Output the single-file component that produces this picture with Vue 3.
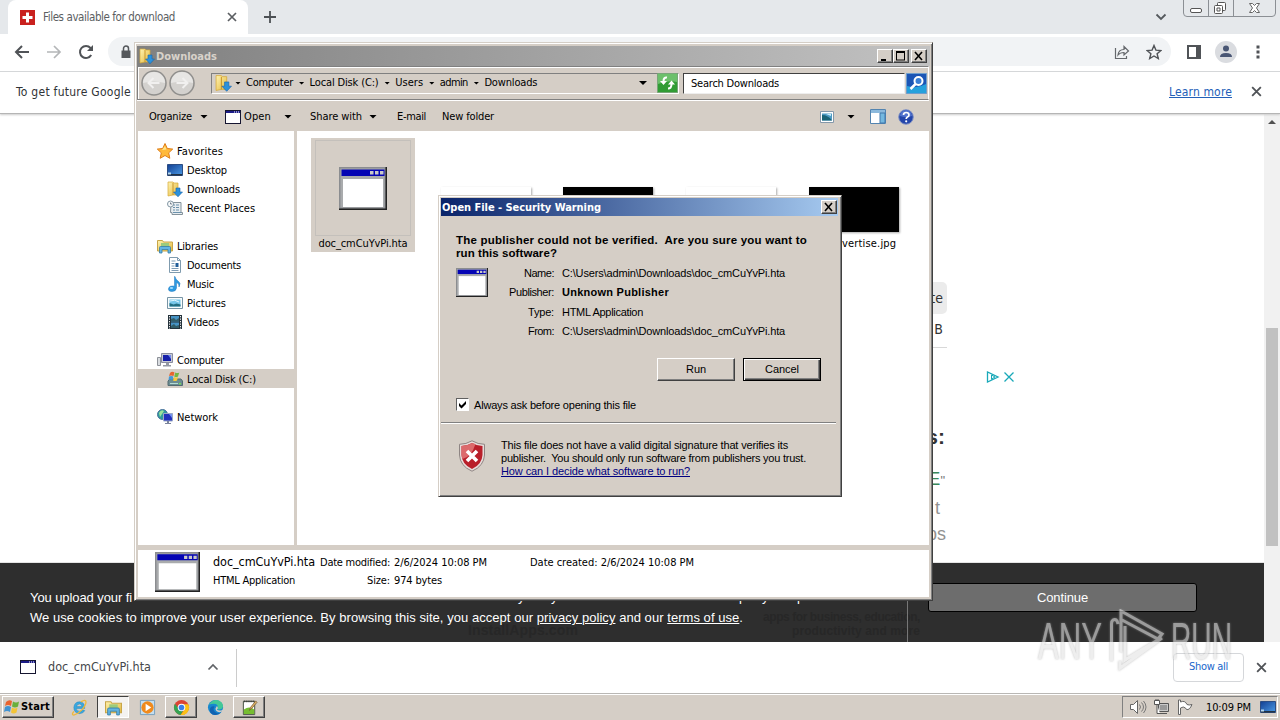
<template>
    <main class="desktop">
        <!-- shared icons -->
        <svg class="sprite">
            <defs>
                <linearGradient id="folderFill" x1="0" y1="0" x2="1" y2="1">
                    <stop offset="0" stop-color="#fff3b0" />
                    <stop offset="1" stop-color="#e3b83f" />
                </linearGradient>
                <linearGradient id="blueFill" x1="0" y1="0" x2="1" y2="1">
                    <stop offset="0" stop-color="#123f92" />
                    <stop offset="1" stop-color="#4c9be6" />
                </linearGradient>
            </defs>
            <symbol id="hta" viewBox="0 0 48 43" preserveAspectRatio="none">
                <path d="M0 0h48v43H0z" fill="#222" />
                <path d="M0 0h46.500v41.500H0z" fill="#8b8d90" />
                <path d="M1.500 1.500h44v39h-44z" fill="#a9abad" />
                <path d="M2.500 2.500h43v6.500h-43z" fill="#0404b4" />
                <path d="M31 4h3.500v3.500H31zM36 4h3.500v3.500H36zM41 4h3.500v3.500H41z" fill="#c8c8c8" />
                <path d="M4 12h40v28H4z" fill="#fff" />
            </symbol>
            <symbol id="smallhta" viewBox="0 0 16 14" preserveAspectRatio="none">
                <path d="M0 0h16v14H0z" fill="#151530" />
                <path d="M1 3h14v10H1z" fill="#fff" />
                <path d="M1 1h14v2H1z" fill="#1b1b88" />
                <path d="M9 1.500h1v1H9zM11 1.500h1v1h-1zM13 1.500h1v1h-1z" fill="#fff" />
            </symbol>
            <symbol id="downloads" viewBox="0 0 16 16">
                <path d="M1 1h5l1 1h4v12H6l-5 1z" fill="url(#folderFill)" stroke="#d6a936" stroke-width=".7" />
                <path d="M6 2v12" stroke="#c9962b" />
                <path d="M9 7h4v4h2.500L11 15.800 6.500 11H9z" fill="#2c91db" stroke="#1765ad" stroke-width=".6" />
            </symbol>
            <symbol id="star" viewBox="0 0 16 16">
                <path d="M8 .5l2.300 5 5.400.6-4 3.700 1.100 5.500L8 12.500l-4.800 2.800 1.100-5.500-4-3.700 5.400-.6z" fill="#ffb93a" stroke="#df7d17" />
                <path d="M8 3l1.400 3.500L5 7z" fill="#ffe58a" />
            </symbol>
            <symbol id="desktop" viewBox="0 0 16 16">
                <path d="M.5 2.500h15v11H.5z" fill="url(#blueFill)" stroke="#2c4d83" />
                <path d="M1 12h14v1.500H1z" fill="#234" />
                <path d="M1 10.500h3v2H1z" fill="#b4d6ef" />
            </symbol>
            <symbol id="recent" viewBox="0 0 16 16">
                <path d="M4 2.500h10v10h1.500v2H5v-2H3.500z" fill="#e8edf0" stroke="#84929b" />
                <path d="M6 5h2m1 0h3M6 7.500h2m1 0h3M6 10h2m1 0h3M6 12.500h8" stroke="#6b91ac" />
                <circle cx="3.500" cy="4" r="3" fill="#f6f8f9" stroke="#8296a3" />
                <path d="M3.500 2.500V4H5" fill="none" stroke="#456" stroke-width=".7" />
            </symbol>
            <symbol id="libraries" viewBox="0 0 16 16">
                <path d="M.5 2.500h5l1 1.500H15.500v9H.5z" fill="url(#folderFill)" stroke="#c8a548" />
                <path d="M4 5h8v5H4z" fill="#9bcb7d" />
                <path d="M2.500 15V9.500q0-1 1-1h9q1 0 1 1V15h-2.500v-3.500h-6V15z" fill="#62b4e3" stroke="#347da8" stroke-width=".8" />
            </symbol>
            <symbol id="documents" viewBox="0 0 16 16">
                <path d="M2.500.5h8l3 3v12h-11z" fill="#fff" stroke="#7f9bae" />
                <path d="M10.500.5v3h3M4.500 4h4M4.500 6.500h3M4.500 9h3M4.500 11.500h7M4.500 13.500h7" fill="none" stroke="#7e9cb5" />
                <path d="M8.500 6h3v4h-3z" fill="#205d99" />
            </symbol>
            <symbol id="music" viewBox="0 0 16 16">
                <path d="M8 .5q.5 3 3 4.500 3.500 2 1 6 .5-3.500-2.500-4.500V12q-.5 3.500-4.500 3.500T1.500 12.500 6 10q1.200 0 1.500.3V.5z" fill="#2c9ae2" stroke="#2478bd" stroke-width=".5" />
                <ellipse cx="4.500" cy="12" rx="1.700" ry="1" fill="#9edcff" />
            </symbol>
            <symbol id="pictures" viewBox="0 0 16 16">
                <path d="M.5 2.500h15v11H.5z" fill="#f8fbfc" stroke="#7794a5" />
                <path d="M2.500 4.500h11v7h-11z" fill="#77c6e9" />
                <path d="M2.500 8l4 1.500 3-1 4 1v2h-11z" fill="#236e82" />
                <path d="M3 6q5-2 9 1" fill="none" stroke="#e2f6ff" />
            </symbol>
            <symbol id="videos" viewBox="0 0 16 16">
                <path d="M1 1h14v14H1z" fill="#25333c" />
                <path d="M4 2h8v5.500H4zM4 8.500h8V14H4z" fill="#4693c4" />
                <path d="M4 5l3-1 2 2 3-2v3.500H4zM4 12l3-2 2 2 3-1v3H4z" fill="#315d68" />
                <path d="M2.500 2v13M13.500 2v13" stroke="#eee" stroke-dasharray="1.300 1.200" />
            </symbol>
            <symbol id="computer" viewBox="0 0 16 16">
                <path d="M.5 5.500h3v8h-3z" fill="#d9dce0" stroke="#8d9198" />
                <path d="M4.500 1.500h11v9h-11z" fill="#c7cad4" stroke="#898d9f" />
                <path d="M6 3h8v6H6z" fill="#1620aa" />
                <path d="M11 3h3v4z" fill="#738bf0" />
                <path d="M9 11h3v2h2v1.500H6V13h3z" fill="#9499a3" />
            </symbol>
            <symbol id="disk" viewBox="0 0 16 16">
                <path d="M1 10l2-2h11l1.500 2v4.500H1z" fill="#6c8c91" stroke="#526b71" />
                <path d="M3 12.500h8" stroke="#b4dcd5" />
                <path d="M12 12h2v1.500h-2z" fill="#74e054" />
                <path d="M3 2q2-2 4.500-.5L6.500 5Q4 4 2 5z" fill="#e76530" />
                <path d="M8.300 1.500q2 1 4 0L11 5.500q-2 1-3.800 0z" fill="#73b743" />
                <path d="M2 5.500q2-1 4.300 0L5.500 9q-2-1-4 0z" fill="#4399d8" />
                <path d="M7 6q2 1 4 0l-1 3.500q-2 1-4 0z" fill="#f5c83c" />
            </symbol>
            <symbol id="network" viewBox="0 0 16 16">
                <circle cx="5.500" cy="5.500" r="5" fill="#2f9c9e" stroke="#4b719c" />
                <path d="M2 4q2-4 5-2L5 5 3 8z" fill="#9ce29b" />
                <path d="M6.500 4.500h9v7.500h-9z" fill="#2230bd" stroke="#9caac6" />
                <path d="M12 5h3v4z" fill="#7593f1" />
                <path d="M10 12h2v2h2v1H8v-1h2z" fill="#7b849b" />
            </symbol>
            <symbol id="cross" viewBox="0 0 12 12">
                <path d="M2 2l8 8M10 2l-8 8" fill="none" stroke="currentColor" stroke-width="1.700" />
            </symbol>
        </svg>

        <section class="browser">
            <header class="tabs">
                <div class="tab">
                    <svg class="favicon" viewBox="0 0 15 15"><path d="M0 0h15v15H0z" fill="#c9211e" /><path d="M6 2.500h3V6h3.500v3H9v3.500H6V9H2.500V6H6z" fill="#fff" /></svg>
                    <span v-fit="132">Files available for download</span>
                    <svg class="tab-close"><use href="#cross" /></svg>
                </div>
                <svg class="plus" viewBox="0 0 14 14"><path d="M7 1v12M1 7h12" stroke="#4c5054" stroke-width="1.800" /></svg>
                <svg class="chevron" viewBox="0 0 12 8"><path d="M1.500 1.500L6 6l4.500-4.500" fill="none" stroke="#55595d" stroke-width="1.800" /></svg>
                <svg class="caption" viewBox="0 0 94 17">
                    <path d="M.5 0v13q0 3.500 3.500 3.500h85q3.500 0 3.500-3.500V0M25.500 0v16M50.500 0v16" fill="none" stroke="#8b8f94" />
                    <rect x="7.500" y="8.500" width="11" height="4" rx="1.500" fill="#fff" stroke="#555" />
                    <rect x="34.500" y="2.500" width="8" height="8" rx="1" fill="#fff" stroke="#555" />
                    <rect x="31.500" y="5.500" width="8" height="8" rx="1" fill="#fff" stroke="#555" />
                    <path d="M34 8h3v3h-3z" fill="none" stroke="#555" />
                    <path d="M66.500 3.500h3l2 2 2-2h3L73.500 8l3 4.500h-3l-2-2-2 2h-3l3-4.500z" fill="#fff" stroke="#666" />
                </svg>
            </header>

            <div class="toolbar">
                <svg class="nav" viewBox="0 0 16 16"><path d="M15 8H2M8 2L2 8l6 6" fill="none" stroke="#505357" stroke-width="2" /></svg>
                <svg class="nav" viewBox="0 0 16 16"><path d="M1 8h13M8 2l6 6-6 6" fill="none" stroke="#b4b6b8" stroke-width="1.700" /></svg>
                <svg class="nav" viewBox="0 0 16 16"><path d="M13.200 11A6 6 0 1 1 12.500 4l1 1" fill="none" stroke="#505357" stroke-width="2" /><path d="M15 1v6H9z" fill="#505357" /></svg>
                <div class="omnibox">
                    <svg class="lock" viewBox="0 0 10 14"><path d="M1 5.500h8.500V13H.5V5.500z" fill="#55585c" /><path d="M2.500 6V3.500a2.500 2.500 0 0 1 5 0V6" fill="none" stroke="#55585c" stroke-width="1.500" /></svg>
                    <svg class="share" viewBox="0 0 16 16"><path d="M1.500 4v10.500h11V12M4 11q.5-5.500 6-5.500V2.500l4.500 4.500-4.500 4V8.500Q6 8.500 4 11z" fill="none" stroke="#65686c" stroke-width="1.200" /></svg>
                    <svg class="bookmark" viewBox="0 0 16 16"><path d="M8 1.500l1.900 4.600 5 .4-3.800 3.200 1.200 4.800L8 12l-4.300 2.500 1.200-4.800L1.100 6.500l5-.4z" fill="none" stroke="#505357" stroke-width="1.400" /></svg>
                </div>
                <svg class="side" viewBox="0 0 14 14"><path d="M1 1h12v12H1z" fill="none" stroke="#505357" stroke-width="2" /><path d="M9 1h4v12H9z" fill="#505357" /></svg>
                <svg class="avatar" viewBox="0 0 22 22"><circle cx="11" cy="11" r="11" fill="#dadce0" /><circle cx="11" cy="7.500" r="3" fill="#495674" /><path d="M5 16q0-4 6-4t6 4z" fill="#495674" /></svg>
                <svg class="menu" viewBox="0 0 4 14"><path d="M.5.5h3v3h-3zM.5 5.500h3v3h-3zM.5 10.500h3v3h-3z" fill="#505357" /></svg>
            </div>

            <div class="infobar">
                <span v-fit="115">To get future Google</span>
                <a v-fit="63">Learn more</a>
                <svg class="info-close"><use href="#cross" /></svg>
            </div>

            <div class="viewport">
                <div class="page">
                    <div class="article">
                        <span class="cell head">Date</span>
                        <span class="cell">B</span>
                        <strong>s:</strong>
                        <span class="green">E<i>"</i></span>
                        <span class="grey first">t</span>
                        <span class="grey">ps</span>
                    </div>
                    <svg class="adchoices" viewBox="0 0 28 12"><path d="M1.500 1v10L12 6z" fill="none" stroke="#19a9b9" stroke-width="1.300" /><path d="M5.500 4v4.500M5.500 4L9 6 5.500 8" stroke="#19a9b9" fill="none" /><path d="M18.500 1.500l9 9m0-9l-9 9" stroke="#19a9b9" stroke-width="1.300" /></svg>
                    <footer class="cookies">
                        <b class="ghost brand" v-fit="110">InstallApps.com</b>
                        <b class="ghost tags"><span v-fit="157">apps for business, education,</span><br><span v-fit="128">productivity and more</span></b>
                        <i class="rule"></i>
                        <div class="cookie-text">
                            <p class="first-line">
                                <span v-fit="102">You upload your fi</span>
                                <span class="tail">y</span>
                                <span class="tail t2">y</span>
                                <span class="tail t3">p</span>
                                <span class="tail t4">y</span>
                                <span class="tail t5">p</span>
                            </p>
                            <p v-fit="713">We use cookies to improve your user experience. By browsing this site, you accept our <a>privacy policy</a> and our <a>terms of use</a>.</p>
                        </div>
                        <button><span v-fit="51">Continue</span></button>
                    </footer>
                </div>
                <div class="scrollbar">
                    <svg viewBox="0 0 8 4"><path d="M0 4l4-4 4 4z" fill="#505050" /></svg>
                    <div class="thumb"></div>
                </div>
            </div>

            <div class="shelf">
                <div class="download">
                    <svg class="shelf-icon"><use href="#smallhta" /></svg>
                    <span v-fit="103">doc_cmCuYvPi.hta</span>
                    <svg class="up" viewBox="0 0 12 8"><path d="M1.500 6.500L6 2l4.500 4.500" fill="none" stroke="#606367" stroke-width="1.700" /></svg>
                </div>
                <button class="show-all"><span v-fit="39">Show all</span></button>
                <svg class="shelf-close"><use href="#cross" /></svg>
            </div>
        </section>

        <section class="explorer">
            <header class="title inactive">
                <svg class="i16"><use href="#downloads" /></svg>
                <b v-fit="61">Downloads</b>
                <div class="controls">
                    <i class="ctl"><svg viewBox="0 0 12 10"><path d="M2 8h5v2H2z" /></svg></i>
                    <i class="ctl"><svg viewBox="0 0 12 10"><path d="M1 0h9v9.500H1zM2 2v6.500h7V2z" fill-rule="evenodd" /></svg></i>
                    <i class="ctl last"><svg viewBox="0 0 12 10"><path d="M2 1l7 8M9 1L2 9" stroke="#000" stroke-width="1.600" /></svg></i>
                </div>
            </header>

            <div class="address-row">
                <div class="rounds">
                    <svg viewBox="0 0 26 26"><circle cx="13" cy="13" r="12" fill="#d3d1ce" stroke="#908f8d" stroke-width="1.500" /><path d="M2 13a11 11 0 0 1 22 0q-11-3-22 0" fill="#e7e6e4" /><path d="M18.500 13H8M12.500 8l-5 5 5 5" fill="none" stroke="#f1f0ef" stroke-width="2" /></svg>
                    <svg viewBox="0 0 26 26"><circle cx="13" cy="13" r="12" fill="#d3d1ce" stroke="#908f8d" stroke-width="1.500" /><path d="M2 13a11 11 0 0 1 22 0q-11-3-22 0" fill="#e7e6e4" /><path d="M7.500 13H18M13.500 8l5 5-5 5" fill="none" stroke="#f1f0ef" stroke-width="2" /></svg>
                </div>
                <div class="address">
                    <svg class="i18"><use href="#downloads" /></svg>
                    <template v-for="crumb in crumbs" :key="crumb.name">
                        <i class="down small"></i>
                        <span v-fit="crumb.width">{{ crumb.name }}</span>
                    </template>
                    <i class="down drop"></i>
                    <svg class="refresh" viewBox="0 0 21 20"><path d="M.5.5h20v19H.5z" fill="#319c34" stroke="#78a678" /><path d="M1 1h19v8q-9-2-19 2z" fill="#6cc06b" /><path d="M10 4.500q-3.500-.5-3.500 4M11 15.500q3.500 0 3.500-4.500" fill="none" stroke="#fff" stroke-width="2" /><path d="M3 8h7l-3.500 4zM11 11.500h7l-3.500-4z" fill="#fff" /></svg>
                </div>
                <div class="search"><span v-fit="88">Search Downloads</span></div>
                <svg class="search-btn" viewBox="0 0 21 21"><path d="M.5.5h20v20H.5z" fill="#1b55b5" stroke="#6d9dcc" /><path d="M1 13q10 3 19-2v9H1z" fill="#25a1dc" /><circle cx="12.500" cy="8" r="4" fill="#397ed4" stroke="#fff" stroke-width="2" /><path d="M9.500 11L4.500 16" stroke="#fff" stroke-width="2.500" /></svg>
            </div>

            <div class="commands">
                <span v-fit="43">Organize</span><i class="down c1"></i>
                <svg class="open-icon"><use href="#smallhta" /></svg>
                <span v-fit="27">Open</span><i class="down c2"></i>
                <span v-fit="52">Share with</span><i class="down c3"></i>
                <span class="email" v-fit="29">E-mail</span>
                <span class="folder" v-fit="52">New folder</span>
                <svg class="view" viewBox="0 0 14 12"><path d="M.5.5h13v11H.5z" fill="#fff" stroke="#8498aa" /><path d="M2 2.500h10v7H2z" fill="#4d9ac4" /><path d="M2 4q6 0 10 5.500H2z" fill="#1a6477" /><path d="M6 3h5v2z" fill="#c6effd" /></svg>
                <i class="down c4"></i>
                <svg class="pane" viewBox="0 0 16 15"><path d="M.5.5h15v14H.5z" fill="#fff" stroke="#5384b0" /><path d="M1 1h14v3H1z" fill="#8cb9dc" /><path d="M10 4h5v10h-5z" fill="#74b8df" stroke="#4279ac" /></svg>
                <svg class="help" viewBox="0 0 16 16"><circle cx="8" cy="8" r="7.300" fill="#2345aa" stroke="#8293c5" /><path d="M2 7a6 6 0 0 1 12 0q-6 2-12 0" fill="#5273cd" /><path d="M5.500 6q0-2.500 2.700-2.500T11 6q0 1.300-1.600 2.100Q8.200 8.800 8.200 10" fill="none" stroke="#fff" stroke-width="1.700" /><circle cx="8.200" cy="12.300" r="1.100" fill="#fff" /></svg>
            </div>

            <div class="content">
                <nav class="tree">
                    <div v-for="(row, i) in tree" :key="i" class="row" :class="{ child: row.child, selected: row.selected }">
                        <template v-if="row.name">
                            <svg class="i16"><use :href="'#' + row.icon" /></svg>
                            <span v-fit="row.width">{{ row.name }}</span>
                        </template>
                    </div>
                </nav>
                <div class="files">
                    <div class="file picked">
                        <div class="frame"><svg><use href="#hta" /></svg></div>
                        <span v-fit="89">doc_cmCuYvPi.hta</span>
                    </div>
                    <div v-for="(file, i) in images" :key="i" class="file">
                        <div class="frame"><div class="shot" :class="file.tone"></div></div>
                        <span v-if="file.name" class="img-name" v-fit="67">{{ file.name }}</span>
                    </div>
                </div>
            </div>

            <footer class="details">
                <svg class="big"><use href="#hta" /></svg>
                <div class="info">
                    <span class="fname" v-fit="102">doc_cmCuYvPi.hta</span>
                    <span class="key" v-fit="70">Date modified:</span>
                    <span v-fit="93">2/6/2024 10:08 PM</span>
                    <span class="created" v-fit="164">Date created: 2/6/2024 10:08 PM</span>
                    <span v-fit="82">HTML Application</span>
                    <span class="key" v-fit="23">Size:</span>
                    <span v-fit="48">974 bytes</span>
                </div>
            </footer>
        </section>

        <section class="dialog">
            <header class="title active">
                <b v-fit="159">Open File - Security Warning</b>
                <i class="ctl last"><svg viewBox="0 0 12 10"><path d="M2 1l7 8M9 1L2 9" stroke="#000" stroke-width="1.600" /></svg></i>
            </header>
            <div class="warn">
                <h1><span v-fit="351">The publisher could not be verified.&nbsp; Are you sure you want to</span><br><span v-fit="101">run this software?</span></h1>
                <div class="facts">
                    <svg class="prog"><use href="#hta" /></svg>
                    <dl>
                        <template v-for="fact in facts" :key="fact.label">
                            <dt><span v-fit="fact.lw">{{ fact.label }}</span></dt>
                            <dd :class="{ strong: fact.bold }"><span v-fit="fact.w">{{ fact.value }}</span></dd>
                        </template>
                    </dl>
                </div>
                <div class="buttons">
                    <button><span v-fit="20">Run</span></button>
                    <button class="default"><span v-fit="34">Cancel</span></button>
                </div>
                <label class="ask">
                    <i class="box"><svg viewBox="0 0 9 9"><path d="M1 3v3l2.500 2.500L8 4V1L3.500 5.500z" /></svg></i>
                    <span v-fit="162">Always ask before opening this file</span>
                </label>
            </div>
            <hr>
            <div class="notice">
                <svg class="shield" viewBox="0 0 28 32">
                    <path d="M14 .8q6 3.500 12.500 3.500V15Q26 26 14 31.200 2 26 1.500 15V4.300Q8 4.300 14 .8z" fill="#e7dcda" stroke="#8e8583" />
                    <path d="M14 3q5 3 10.500 3v9Q24 24.500 14 29 4 24.500 3.500 15V6Q9 6 14 3z" fill="#b91f2a" />
                    <path d="M14 3Q9 6 3.500 6v9q0 2 1 4 9-2 13-15z" fill="#dc6a6c" />
                    <path d="M9 11l10 10M19 11L9 21" stroke="#fff" stroke-width="3.600" />
                </svg>
                <p>
                    <span v-fit="287">This file does not have a valid digital signature that verifies its</span><br>
                    <span v-fit="305">publisher.&nbsp; You should only run software from publishers you trust.</span><br>
                    <a v-fit="189">How can I decide what software to run?</a>
                </p>
            </div>
        </section>

        <footer class="taskbar">
            <button class="start">
                <svg viewBox="0 0 16 16"><path d="M2 3q3-3 6-1L7 7Q4 5 1 7z" fill="#e9632f" /><path d="M9 2.500q3 2 6 0L14 7.500q-3 2-6 0z" fill="#69af3c" /><path d="M1 8q3-2 6 0l-1 5q-3-2-6 0z" fill="#4193d2" /><path d="M8 8.500q3 2 5.500 0l-1 5q-3 2-5.500 0z" fill="#f3c436" /></svg>
                <b v-fit="29">Start</b>
            </button>
            <div class="task"><svg viewBox="0 0 18 18"><path d="M14.500 10H5.500q.5 3 3.800 3 2.300 0 3.300-1.500l2 .8Q13 15.500 9 15.500q-6-.5-6-6.500 .5-6 6.200-6 5.800.5 5.300 7zM5.700 8h6q-.4-2.700-2.700-2.700T5.700 8z" fill="#3aa8df" stroke="#2383bd" stroke-width=".5" /><path d="M3 13q-3 4 0 4 4-1 9-6 5-6 3.500-9-1-1.500-5 1" fill="none" stroke="#efb83a" stroke-width="1.400" /></svg></div>
            <div class="task pressed"><svg><use href="#libraries" /></svg></div>
            <div class="task"><svg viewBox="0 0 18 18"><path d="M1.500 1.500h15v15h-15z" fill="#c5dff0" stroke="#769ebb" /><circle cx="9" cy="9" r="6.500" fill="#f08a1c" /><path d="M7 5l6 4-6 4z" fill="#fff" /></svg></div>
            <div class="task raised"><svg viewBox="0 0 18 18"><circle cx="9" cy="9" r="8" fill="#dc4334" /><path d="M2.070 5A8 8 0 0 0 8 16.900L12 10H6z" fill="#34a352" /><path d="M9 5.500h7.200A8 8 0 0 1 8 16.900l4.500-6z" fill="#fbc116" /><circle cx="9" cy="9" r="4" fill="#fff" /><circle cx="9" cy="9" r="3" fill="#3d7fe8" /></svg></div>
            <div class="task"><svg viewBox="0 0 18 18"><circle cx="9" cy="9" r="8" fill="#1787cf" /><path d="M2 6q3-5 8-5 7 1 7 7-1 4-6 3 2-6-4-6-3 0-5 1z" fill="#44c897" /><path d="M8 8q-3 5 3 7 2 .6 4-1-3 3.500-7 3-5-1-5-6 1-4 5-3z" fill="#1263b1" /><path d="M10.500 7.500q2 2 0 4 3 1.800 6.500-.5v2l-4 1q-4-.5-4-4z" fill="#d4cec6" /></svg></div>
            <div class="task raised"><svg viewBox="0 0 18 18"><path d="M2.500 2.500h12v14h-12z" fill="#fff" stroke="#414b3b" /><path d="M3 11q6-4 11 0v5H3z" fill="#76bd30" /><path d="M3 2.500h11" stroke="#333" stroke-width="2" stroke-dasharray="1 1" /><path d="M9 12l1-3 5.500-7L17 3.500l-6 7z" fill="#dcb365" stroke="#6c4b26" stroke-width=".7" /></svg></div>
            <div class="tray">
                <svg class="speaker" viewBox="0 0 18 16"><path d="M1.500 5.500h3l4-4v13l-4-4h-3z" fill="#fff" stroke="#666" /><path d="M10.500 5.500q2 2.500 0 5M12.500 3.500q4 4.500 0 9M14.500 2q5 6 0 12" fill="none" stroke="#777" /></svg>
                <svg class="net" viewBox="0 0 16 16"><path d="M5.500 4.500h10v8h-10z" fill="#c9c9c9" stroke="#555" /><path d="M7 6h7v5H7z" fill="#999" /><path d="M7 14.500h7M1.500 1.500h5v4h-5zM3 0v2M5 0v2M4 5.500v9h3" fill="#fff" stroke="#555" /></svg>
                <svg class="flag" viewBox="0 0 16 16"><path d="M1.500 1v14.500h2V9q3-2 5 0l1 1.500q3 1 5.500-5-3 1-5 0Q8 1 3.500 3V1z" fill="#fff" stroke="#666" /></svg>
                <span v-fit="45">10:09 PM</span>
                <svg class="peek"><use href="#desktop" /></svg>
            </div>
        </footer>

        <svg class="watermark" viewBox="0 0 196 64">
            <text x="0" y="50" textLength="64" lengthAdjust="spacingAndGlyphs">ANY</text>
            <path d="M80 15q-1-6-5-4-1.500 1-1.500 4v37M83 43V2l41 23-4 5-36-19M87 17v34l36-22M82 52v7l42-30" />
            <text x="133" y="50" textLength="61" lengthAdjust="spacingAndGlyphs">RUN</text>
        </svg>
    </main>
</template>

<script setup>
// spreads the letters of a label over the given width
const vFit = {
    mounted(el, { value }) {
        const range = document.createRange();
        range.selectNodeContents(el);
        const natural = range.getBoundingClientRect().width;
        el.style.letterSpacing = `${(value - natural) / el.textContent.length}px`;
    },
};

const crumbs = [
    { name: 'Computer', width: 47 },
    { name: 'Local Disk (C:)', width: 69 },
    { name: 'Users', width: 28 },
    { name: 'admin', width: 28 },
    { name: 'Downloads', width: 53 },
];

const tree = [
    { name: 'Favorites', icon: 'star', width: 46 },
    { name: 'Desktop', icon: 'desktop', width: 40, child: true },
    { name: 'Downloads', icon: 'downloads', width: 53, child: true },
    { name: 'Recent Places', icon: 'recent', width: 68, child: true },
    {},
    { name: 'Libraries', icon: 'libraries', width: 41 },
    { name: 'Documents', icon: 'documents', width: 54, child: true },
    { name: 'Music', icon: 'music', width: 27, child: true },
    { name: 'Pictures', icon: 'pictures', width: 39, child: true },
    { name: 'Videos', icon: 'videos', width: 32, child: true },
    {},
    { name: 'Computer', icon: 'computer', width: 47 },
    { name: 'Local Disk (C:)', icon: 'disk', width: 69, child: true, selected: true },
    {},
    { name: 'Network', icon: 'network', width: 41 },
];

const images = [
    { tone: 'white' },
    { tone: 'black' },
    { tone: 'white' },
    { tone: 'black', name: 'advertise.jpg' },
];

const facts = [
    { label: 'Name:', value: 'C:\\Users\\admin\\Downloads\\doc_cmCuYvPi.hta', lw: 30, w: 223 },
    { label: 'Publisher:', value: 'Unknown Publisher', lw: 45, w: 107, bold: true },
    { label: 'Type:', value: 'HTML Application', lw: 26, w: 81 },
    { label: 'From:', value: 'C:\\Users\\admin\\Downloads\\doc_cmCuYvPi.hta', lw: 26, w: 223 },
];
</script>

<style>
body {
    overflow: hidden;
}
</style>

<style scoped>
.desktop {
    position: relative;
    width: 1280px;
    height: 720px;
    overflow: hidden;
    background: #fff;
    font: 11px/14px "DejaVu Sans Condensed", "DejaVu Sans", sans-serif;
    font-stretch: condensed;
    color: #000;
    white-space: nowrap;
}

.desktop * {
    box-sizing: border-box;
}

svg {
    display: block;
    flex: none;
}

span, b, a {
    flex: none;
}

.sprite {
    position: absolute;
    width: 0;
    height: 0;
}

.i16 {
    width: 16px;
    height: 16px;
}

.i18 {
    width: 17px;
    height: 18px;
}

button {
    padding: 0;
    font: inherit;
}

/* browser */
.browser {
    height: 693px;
    display: flex;
    flex-direction: column;
}

.tabs {
    display: flex;
    height: 34px;
    padding-left: 8px;
    background: #e5e8eb;
}

.tab {
    display: flex;
    align-items: center;
    width: 240px;
    padding-left: 12px;
    background: #fff;
    border-radius: 8px 8px 0 0;
    color: #5b5e62;
    font-size: 11.500px;
}

.favicon {
    width: 15px;
    height: 15px;
    margin-right: 8px;
}

.tab-close {
    width: 12px;
    height: 12px;
    margin-left: auto;
    margin-right: 10px;
}

.plus {
    width: 14px;
    height: 14px;
    margin: 10px 0 0 15px;
}

.chevron {
    width: 12px;
    height: 8px;
    margin: 13px 16px 0 auto;
}

.caption {
    width: 94px;
    height: 17px;
    margin-right: 3px;
}

.toolbar {
    display: flex;
    align-items: center;
    height: 38px;
    padding: 0 20px 2px 14px;
    border-bottom: 1px solid #d6d8da;
}

.nav {
    width: 16px;
    height: 16px;
    margin-right: 16px;
}

.omnibox {
    display: flex;
    align-items: center;
    width: 1064px;
    height: 29px;
    margin-left: -2px;
    padding: 0 9px 0 13px;
    border-radius: 15px;
    background: #f1f3f5;
}

.lock {
    width: 10px;
    height: 14px;
}

.share {
    width: 16px;
    height: 16px;
    margin-left: auto;
    margin-right: 16px;
}

.bookmark {
    width: 16px;
    height: 16px;
}

.side {
    width: 14px;
    height: 14px;
    margin-left: 16px;
}

.avatar {
    width: 22px;
    height: 22px;
    margin-left: 14px;
}

.menu {
    width: 4px;
    height: 14px;
    margin-left: 19px;
}

.infobar {
    position: relative;
    display: flex;
    align-items: center;
    height: 42px;
    padding: 0 18px 2px 16px;
    border-bottom: 1px solid #b5b5b5;
    box-shadow: 0 1px 2px #ccc;
    font-size: 12px;
    color: #303336;
}

.infobar a {
    margin-left: auto;
    color: #2360b8;
    text-decoration: underline;
}

.info-close {
    width: 13px;
    height: 13px;
    margin-left: 18px;
    margin-right: -1px;
    color: #505357;
}

.viewport {
    display: flex;
    flex: 1;
    overflow: hidden;
}

.page {
    position: relative;
    width: 1264px;
    display: flex;
    flex-direction: column;
}

.article {
    display: flex;
    flex-direction: column;
    align-items: flex-end;
    width: 947px;
    height: 449px;
    padding-top: 168px;
    font: 16px/32px "Liberation Sans", Arial, sans-serif;
    color: #333;
}

.cell {
    width: 60px;
    height: 34px;
    padding-right: 4px;
    text-align: right;
    border-bottom: 1px solid #d8d8d8;
    font: 14px/30px "DejaVu Sans Condensed", sans-serif;
}

.head {
    height: 32px;
    border: 0;
    border-radius: 5px;
    background: #ebebeb;
    line-height: 32px;
}

.article strong {
    margin: 73px 2px 0 0;
    font-size: 21px;
}

.green {
    margin: 12px 2px 0 0;
    color: #38875a;
    font-size: 18px;
    line-height: 28px;
}

.green i {
    font-size: 13px;
    font-style: normal;
    color: #777;
}

.grey {
    margin-right: 1px;
    font-size: 18px;
    line-height: 26px;
    color: #929292;
}

.first {
    margin-right: 7px;
}

.adchoices {
    position: absolute;
    left: 986px;
    top: 257px;
    width: 28px;
    height: 12px;
}

.cookies {
    position: relative;
    display: flex;
    justify-content: space-between;
    height: 80px;
    padding: 20px 67px 0 30px;
    border-top: 1px solid #e4e4e4;
    background: #2e2e2e;
    color: #fff;
    font: 13px/20px "Liberation Sans", Arial, sans-serif;
}

.cookie-text {
    padding-top: 5px;
}

.cookie-text p {
    position: relative;
    width: max-content;
    margin: 0;
}

.cookie-text .first-line {
    display: flex;
}

.cookie-text a {
    text-decoration: underline;
}

/* ends of the first line that hang below the explorer window */
.tail {
    width: 7px;
    margin: -1px 0 0 386px;
}

.t2 {
    margin-left: 26px;
}

.t3 {
    margin-left: 181px;
}

.t4 {
    margin-left: 16px;
}

.t5 {
    margin-left: 28px;
}

.cookies button {
    width: 269px;
    height: 29px;
    padding-top: 1px;
    border: 1px solid #000;
    border-radius: 3px;
    background: #6d6d6d;
    color: #fff;
}

.ghost {
    position: absolute;
    color: #272727;
}

.brand {
    left: 468px;
    top: 60px;
    font-size: 14px;
    line-height: 14px;
}

.tags {
    left: 760px;
    top: 47px;
    width: 160px;
    font-size: 12px;
    line-height: 14px;
    text-align: right;
}

.rule {
    position: absolute;
    left: 907px;
    top: 30px;
    width: 1px;
    height: 49px;
    background: #777;
}

.scrollbar {
    width: 16px;
    padding: 6px 2px 0;
    background: #f1f1f1;
}

.scrollbar svg {
    width: 8px;
    height: 4px;
    margin-left: 2px;
}

.thumb {
    height: 218px;
    margin-top: 204px;
    background: #c1c1c1;
}

.shelf {
    display: flex;
    align-items: center;
    height: 51px;
    padding-right: 12px;
    background: #fff;
}

.download {
    display: flex;
    align-items: center;
    width: 237px;
    height: 38px;
    padding: 0 17px 1px 20px;
    border-right: 1px solid #ccc;
    color: #44474a;
    font-size: 12.500px;
}

.shelf-icon {
    width: 16px;
    height: 14px;
    margin-right: 12px;
}

.up {
    width: 12px;
    height: 8px;
    margin-left: auto;
}

.show-all {
    width: 71px;
    height: 29px;
    margin-left: auto;
    padding-bottom: 2px;
    border: 1px solid #d5d7da;
    border-radius: 4px;
    background: #fff;
    color: #1a66cb;
}

.shelf-close {
    width: 13px;
    height: 13px;
    margin-left: 11px;
    color: #505357;
}

/* windows */
.explorer {
    position: absolute;
    left: 134px;
    top: 42px;
    width: 799px;
    height: 559px;
    padding: 2px;
    border: 1px solid;
    border-color: #d4cec6 #404040 #404040 #d4cec6;
    box-shadow: inset 1px 1px #fff, inset -1px -1px #808080;
    background: #d5cec6;
}

.title {
    display: flex;
    align-items: center;
    color: #fff;
}

.title b {
    margin-top: 1px;
    font-size: 11px;
}

.inactive {
    height: 20px;
    margin: 1px 0 0;
    padding: 0 3px 0 2px;
    background: linear-gradient(90deg, #808080, #c2c2c2);
    color: #d8d2ca;
}

.inactive b {
    margin-left: 1px;
}

.controls {
    display: flex;
    margin-left: auto;
}

.ctl {
    display: flex;
    align-items: center;
    justify-content: center;
    width: 16px;
    height: 14px;
    border: 1px solid;
    border-color: #fff #404040 #404040 #fff;
    box-shadow: inset -1px -1px #808080;
    background: #d5cec6;
}

.ctl svg {
    width: 12px;
    height: 10px;
}

.controls .last {
    margin-left: 2px;
}

.address-row {
    display: flex;
    align-items: center;
    height: 34px;
    margin: 0 1px 0 0;
    padding-left: 3px;
    border: 1px solid;
    border-color: #808080 #fff #808080 #808080;
    box-shadow: inset 1px 1px #fff, 0 1px #fff;
}

.rounds {
    display: flex;
    gap: 2px;
}

.rounds svg {
    width: 26px;
    height: 26px;
}

.address {
    display: flex;
    align-items: center;
    width: 468px;
    height: 21px;
    margin-left: 16px;
    padding-left: 3px;
    border: 1px solid;
    border-color: #808080 #fff #fff #808080;
}

.down {
    display: block;
    flex: none;
    width: 8px;
    height: 4px;
    background: #000;
    clip-path: polygon(0 0, 100% 0, 50% 100%);
}

.small {
    width: 6px;
    height: 3px;
    margin: 0 5px 0 5.600px;
}

.i18 + .small {
    margin-left: 3px;
}

.drop {
    margin-left: auto;
    margin-right: 10px;
}

.refresh {
    width: 21px;
    height: 20px;
}

.search {
    width: 222px;
    height: 21px;
    margin-left: 4px;
    padding: 3px 7px;
    border: 1px solid;
    border-color: #404040 #eee #eee #404040;
    background: #fff;
}

.search-btn {
    width: 21px;
    height: 21px;
    margin-left: 1px;
}

.commands {
    display: flex;
    align-items: center;
    height: 31px;
    padding: 2px 16px 0 12px;
}

.c1 {
    margin: 0 17px 0 8px;
}

.c2 {
    margin: 0 18px 0 13px;
}

.c3 {
    margin-left: 7px;
}

.c4 {
    margin: 0 15px 0 13px;
}

.open-icon {
    width: 16px;
    height: 14px;
    margin-right: 3px;
}

.email {
    margin-left: 20px;
}

.folder {
    margin-left: 16px;
}

.view {
    width: 14px;
    height: 12px;
    margin-left: auto;
}

.pane {
    width: 16px;
    height: 15px;
    margin-right: 12px;
}

.help {
    width: 16px;
    height: 16px;
}

.content {
    display: flex;
    height: 414px;
    margin: 0 1px;
    background: #fff;
}

.tree {
    width: 159px;
    padding-top: 10px;
    border-right: 3px solid #d5cec6;
}

.row {
    display: flex;
    align-items: center;
    gap: 4px;
    height: 19px;
    padding-left: 19px;
}

.row span {
    margin-top: 2px;
}

.child {
    padding-left: 29px;
}

.selected {
    background: #d5cec6;
}

.files {
    display: flex;
    gap: 18.700px;
    padding: 7px 0 0 14px;
}

.file {
    width: 104px;
    height: 114px;
    padding: 2px 3px;
    text-align: center;
}

.file > span {
    display: block;
    margin-top: 1px;
}

.frame {
    display: flex;
    align-items: center;
    justify-content: center;
    height: 96px;
}

.frame svg {
    width: 48px;
    height: 43px;
}

.picked {
    background: #d5cec6;
}

.picked .frame {
    margin: 0 1px;
    border: 1px solid #c4c0bb;
}

.shot {
    flex: none;
    width: 90px;
    height: 45px;
    margin-top: 43px;
    box-shadow: 1px 1px 2px #aaa;
}

.black {
    background: #000;
}

.img-name {
    padding-left: 18px;
}

.details {
    display: flex;
    height: 52px;
    margin: 0 1px;
    padding: 2px 0 0 17px;
    border-top: 5px solid #d5cec6;
    background: #fff;
}

.big {
    width: 45px;
    height: 40px;
}

.info {
    display: grid;
    grid-template-columns: 107px 74px 136px auto;
    grid-auto-rows: 18px;
    margin-left: 13px;
    line-height: 18px;
}

.info span {
    width: max-content;
    margin-top: 2px;
}

.info .fname {
    margin-top: 1px;
    font-size: 12.500px;
}

.info .key {
    justify-self: end;
    margin-right: 4px;
}

/* warning dialog */
.dialog {
    position: absolute;
    left: 438px;
    top: 195px;
    width: 404px;
    height: 302px;
    padding: 2px 3px;
    border: 1px solid;
    border-color: #d5cec6 #404040 #404040 #d5cec6;
    box-shadow: inset 1px 1px #fff, inset -1px -1px #808080;
    background: #d5cec6;
    font-family: "Liberation Sans", Arial, sans-serif;
}

.active {
    justify-content: space-between;
    height: 18px;
    margin-left: -1px;
    padding: 0 1px 0 1px;
    background: linear-gradient(90deg, #0a246a, #a6caf0);
    font-family: "DejaVu Sans Condensed", sans-serif;
}

.warn {
    height: 206px;
    padding: 18px 17px 0 14px;
}

h1 {
    margin: 0;
    font-size: 11.500px;
    line-height: 13px;
}

.facts {
    display: flex;
    margin-top: 4px;
}

.prog {
    width: 32px;
    height: 29px;
    margin-top: 4px;
}

dl {
    display: grid;
    grid-template-columns: 66px auto;
    grid-auto-rows: 19.400px;
    column-gap: 8px;
    margin: 0;
    line-height: 19px;
}

dt {
    text-align: right;
}

dd {
    margin: 0;
}

.strong {
    font-weight: bold;
}

.buttons {
    display: flex;
    justify-content: flex-end;
    gap: 8px;
    margin-top: 16px;
}

.buttons button {
    width: 78px;
    height: 23px;
    border: 1px solid;
    border-color: #fff #404040 #404040 #fff;
    box-shadow: inset -1px -1px #808080;
    background: #d5cec6;
}

.buttons .default {
    border-color: #000;
    box-shadow: inset 1px 1px #fff, inset -1px -1px #404040, inset -2px -2px #808080;
}

.ask {
    display: flex;
    align-items: center;
    gap: 5px;
    margin-top: 17px;
}

.box {
    width: 13px;
    height: 13px;
    padding: 1px;
    border: 1px solid;
    border-color: #606060 #fff #fff #606060;
    background: #fff;
}

.box svg {
    width: 9px;
    height: 9px;
}

hr {
    height: 2px;
    margin: 0 2px 0 -1px;
    border: 0;
    border-top: 1px solid #808080;
    border-bottom: 1px solid #fff;
}

.notice {
    display: flex;
    padding: 15px 0 0 16px;
}

.shield {
    width: 28px;
    height: 32px;
    margin-top: 1px;
}

.notice p {
    margin: 0 0 0 15px;
    line-height: 13px;
}

.notice a {
    color: #000080;
    text-decoration: underline;
}

/* taskbar */
.taskbar {
    display: flex;
    align-items: center;
    height: 27px;
    padding: 0 2px;
    border-top: 1px solid #b9b7b4;
    box-shadow: inset 0 1px #fff;
    background: #d5cec6;
}

.start {
    display: flex;
    align-items: center;
    width: 52px;
    height: 22px;
    margin-right: 9px;
    padding-left: 1px;
    border: 1px solid;
    border-color: #fff #404040 #404040 #fff;
    box-shadow: inset -1px -1px #808080;
    background: #d5cec6;
}

.start svg {
    width: 16px;
    height: 16px;
    margin-right: 1px;
}

.task {
    display: flex;
    align-items: center;
    justify-content: center;
    width: 32px;
    height: 22px;
    margin-right: 2px;
    border: 1px solid transparent;
}

.task svg {
    width: 17px;
    height: 17px;
}

.raised {
    border-color: #fff #404040 #404040 #fff;
    box-shadow: inset -1px -1px #808080;
}

.pressed {
    border-color: #404040 #fff #fff #404040;
    background: #f4f2f0;
}

.tray {
    display: flex;
    align-items: center;
    width: 156px;
    height: 22px;
    margin-left: auto;
    padding-left: 6px;
    border: 1px solid;
    border-color: #808080 #fff #fff #808080;
}

.tray span {
    margin-top: 1px;
}

.speaker {
    width: 18px;
    height: 16px;
}

.net {
    width: 16px;
    height: 16px;
    margin-left: 6px;
}

.flag {
    width: 16px;
    height: 16px;
    margin: 0 13px 0 8px;
}

.peek {
    width: 16px;
    height: 16px;
    margin-left: 9px;
}

.watermark {
    position: absolute;
    left: 1038px;
    top: 609px;
    width: 196px;
    height: 64px;
    opacity: .6;
    font: 52px "Liberation Sans", Arial, sans-serif;
    fill: #e4e4e4;
    filter: drop-shadow(0 0 1px #999);
}

.watermark path {
    fill: none;
    stroke: #e4e4e4;
    stroke-width: 3px;
}
</style>
